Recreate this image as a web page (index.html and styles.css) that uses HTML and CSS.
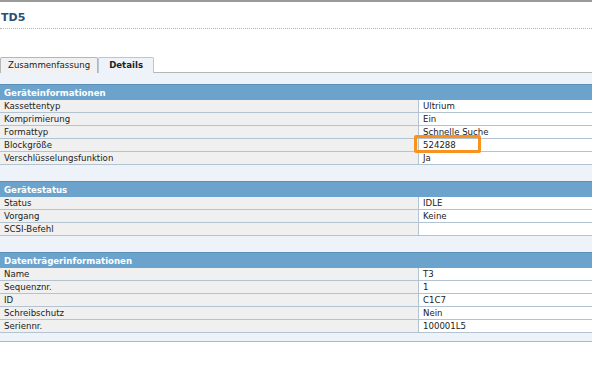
FILE: index.html
```html
<!doctype html>
<html>
<head>
  <meta charset="utf-8">
  <title>TD5 Details</title>
  <link rel="stylesheet" href="styles.css">
</head>
<body>

<div class="page-head">
  <h1 class="device-title">TD5</h1>
</div>

<ul class="tabs">
  <li class="tab">Zusammenfassung</li>
  <li class="tab active">Details</li>
</ul>

<div class="panel">
  <table class="info">
    <tr><th colspan="2">Geräteinformationen</th></tr>
    <tr><td class="label">Kassettentyp</td><td class="value">Ultrium</td></tr>
    <tr><td class="label">Komprimierung</td><td class="value">Ein</td></tr>
    <tr><td class="label">Formattyp</td><td class="value">Schnelle Suche</td></tr>
    <tr><td class="label">Blockgröße</td><td class="value highlight-cell">524288<span class="highlight"></span></td></tr>
    <tr><td class="label">Verschlüsselungsfunktion</td><td class="value">Ja</td></tr>
  </table>

  <table class="info">
    <tr><th colspan="2">Gerätestatus</th></tr>
    <tr><td class="label">Status</td><td class="value">IDLE</td></tr>
    <tr><td class="label">Vorgang</td><td class="value">Keine</td></tr>
    <tr><td class="label">SCSI-Befehl</td><td class="value"></td></tr>
  </table>

  <table class="info">
    <tr><th colspan="2">Datenträgerinformationen</th></tr>
    <tr><td class="label">Name</td><td class="value">T3</td></tr>
    <tr><td class="label">Sequenznr.</td><td class="value">1</td></tr>
    <tr><td class="label">ID</td><td class="value">C1C7</td></tr>
    <tr><td class="label">Schreibschutz</td><td class="value">Nein</td></tr>
    <tr><td class="label">Seriennr.</td><td class="value">100001L5</td></tr>
  </table>
</div>

</body>
</html>
```

FILE: styles.css
```css
body {
  margin: 0;
  background-color: white;
  font-family: "DejaVu Sans", Verdana, sans-serif;
  font-size: 8.6px;
  color: #222;
}

.page-head {
  border-top: 2px solid #9a9a9a;
  padding: 9px 0 0;
}

.device-title {
  margin: 0;
  padding: 0 0 4px 1px;
  font-size: 11px;
  font-weight: bold;
  color: #2b4f72;
  border-bottom: 1px dotted #b5b5b5;
}

.tabs {
  list-style: none;
  margin: 28px 0 0;
  padding: 0;
  display: flex;
  height: 15px;
}

.tab {
  padding: 2px 7px 0;
  height: 13px;
  background-color: #f1f1f1;
  border: 1px solid #b6b6b6;
  border-bottom: none;
  border-radius: 2px 2px 0 0;
}

.tab.active {
  font-weight: bold;
  padding: 2px 10px 0;
  background-color: #eef3f9;
  border-color: #b7c7d6;
}

.panel {
  background-color: #eef3f9;
  border-top: 1px solid #b6b6b6;
  border-bottom: 1px solid #b6b6b6;
  padding: 11px 0 8px;
}

.info {
  width: 100%;
  border-collapse: collapse;
  margin-bottom: 16px;
}

.info:last-child {
  margin-bottom: 0;
}

.info th {
  background-color: #6ba3cc;
  border-top: 1px solid #5a8fb8;
  color: white;
  text-align: left;
  font-weight: bold;
  height: 15px;
  padding: 0 4px;
}

.info td {
  height: 12px;
  padding: 0 4px;
  border-bottom: 1px solid #b3c3d1;
  line-height: 12px;
}

.info .label {
  width: 410px;
  background-color: #f0f0f0;
  border-right: 1px solid #b3c3d1;
}

.info .value {
  background-color: white;
}

.highlight-cell {
  position: relative;
}

.highlight {
  position: absolute;
  left: -5px;
  top: -4px;
  width: 61px;
  height: 12px;
  border: 3px solid #f7931e;
  border-radius: 2px;
}
```
